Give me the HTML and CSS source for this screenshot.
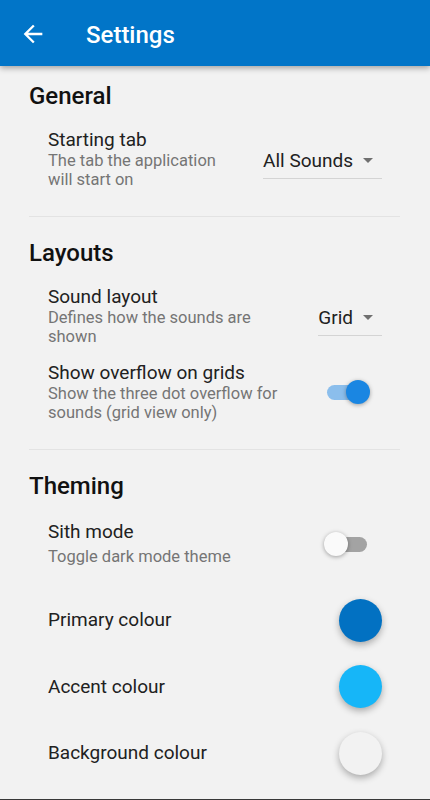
FILE: index.html
```html
<!DOCTYPE html>
<html lang="en">
<head>
    <meta charset="UTF-8">
    <meta name="viewport" content="width=device-width, initial-scale=1.0">
    <title>Settings</title>
    <link rel="stylesheet" href="styles.css">
</head>
<body>
    <div class="screen">
        <header class="appbar">
            <svg class="back" viewBox="0 0 24 24"><path d="M20 11H7.83l5.59-5.59L12 4l-8 8 8 8 1.41-1.41L7.83 13H20v-2z"/></svg>
            <h1>Settings</h1>
        </header>

        <main class="settings">
            <section class="group">
                <h2>General</h2>
                <div class="item">
                    <div class="item-text">
                        <div class="item-title">Starting tab</div>
                        <div class="item-sub">The tab the application will start on</div>
                    </div>
                    <div class="dropdown"><span>All Sounds</span><span class="caret"></span></div>
                </div>
            </section>

            <section class="group">
                <h2>Layouts</h2>
                <div class="item">
                    <div class="item-text">
                        <div class="item-title">Sound layout</div>
                        <div class="item-sub">Defines how the sounds are shown</div>
                    </div>
                    <div class="dropdown"><span>Grid</span><span class="caret"></span></div>
                </div>
                <div class="item">
                    <div class="item-text">
                        <div class="item-title">Show overflow on grids</div>
                        <div class="item-sub">Show the three dot overflow for sounds (grid view only)</div>
                    </div>
                    <div class="toggle on"></div>
                </div>
            </section>

            <section class="group">
                <h2>Theming</h2>
                <div class="item switch-item">
                    <div class="item-text">
                        <div class="item-title">Sith mode</div>
                        <div class="item-sub">Toggle dark mode theme</div>
                    </div>
                    <div class="toggle"></div>
                </div>
                <div class="swatches">
                    <div class="item">
                        <div class="item-title">Primary colour</div>
                        <div class="swatch primary"></div>
                    </div>
                    <div class="item">
                        <div class="item-title">Accent colour</div>
                        <div class="swatch accent"></div>
                    </div>
                    <div class="item">
                        <div class="item-title">Background colour</div>
                        <div class="swatch background"></div>
                    </div>
                </div>
            </section>
        </main>

        <div class="nav-edge"></div>
    </div>
</body>
</html>
```

FILE: styles.css
```css
body {
    margin: 0;
    font-family: Roboto, 'Noto Sans', sans-serif;
    background-color: #f2f2f2;
    color: #212121;
}

.screen {
    height: 800px;
    display: flex;
    flex-direction: column;
    overflow: hidden;
}

.appbar {
    height: 66px;
    flex-shrink: 0;
    display: flex;
    align-items: center;
    background-color: #0175c8;
    box-shadow: 0 2px 6px rgba(0, 0, 0, 0.35);
}

.back {
    width: 28px;
    height: 28px;
    margin: 2px 0 0 19px;
    fill: #fff;
}

.appbar h1 {
    margin: 0 0 0 39px;
    padding-top: 3px;
    font-size: 24px;
    font-weight: 500;
    color: #fff;
}

.settings {
    flex: 1;
    padding: 15px 30px 0 29px;
}

.group h2 {
    margin: 0 0 18px;
    font-size: 24px;
    line-height: 30px;
    font-weight: 500;
    color: #111;
}

.group + .group {
    margin-top: 27px;
    padding-top: 21px;
    border-top: 1px solid #e3e3e3;
}

.item {
    display: flex;
    align-items: center;
    gap: 24px;
    padding: 0 18px 0 19px;
}

.item + .item {
    margin-top: 16px;
}

.item-text {
    flex: 1;
    min-width: 0;
}

.item-title {
    flex: 1;
    font-size: 19px;
    line-height: 22px;
}

.item-sub {
    font-size: 16.5px;
    line-height: 19px;
    color: #757575;
}

.switch-item {
    margin-top: 20px;
}

.switch-item .item-sub {
    margin-top: 4px;
}

.dropdown {
    display: flex;
    align-items: center;
    padding: 9px 9px 5px 0;
    border-bottom: 1px solid #d4d4d4;
    font-size: 19px;
    line-height: 24px;
}

.caret {
    width: 0;
    height: 0;
    margin-left: 10px;
    border-left: 5px solid transparent;
    border-right: 5px solid transparent;
    border-top: 5px solid #707070;
}

.toggle {
    position: relative;
    width: 46px;
    height: 24px;
    margin-right: 12px;
}

.toggle::before {
    content: '';
    position: absolute;
    left: 3px;
    right: 3px;
    top: 5px;
    height: 15px;
    border-radius: 8px;
    background-color: #a3a3a3;
}

.toggle::after {
    content: '';
    position: absolute;
    left: 0;
    top: 0;
    width: 24px;
    height: 24px;
    border-radius: 50%;
    background-color: #fafafa;
    box-shadow: 0 1px 4px rgba(0, 0, 0, 0.35);
}

.toggle.on::before {
    background-color: #8bbeec;
}

.toggle.on::after {
    left: auto;
    right: 0;
    background-color: #1a86e2;
}

.swatches {
    margin-top: 32.5px;
    display: flex;
    flex-direction: column;
    gap: 23.5px;
}

.swatches .item + .item {
    margin-top: 0;
}

.swatch {
    width: 43px;
    height: 43px;
    border-radius: 50%;
    box-shadow: 0 3px 7px rgba(0, 0, 0, 0.3);
}

.primary {
    background-color: #0271c2;
}

.accent {
    background-color: #16b6f8;
}

.background {
    background-color: #f2f2f2;
}

.nav-edge {
    height: 1px;
    flex-shrink: 0;
    background-color: #383838;
}
```
